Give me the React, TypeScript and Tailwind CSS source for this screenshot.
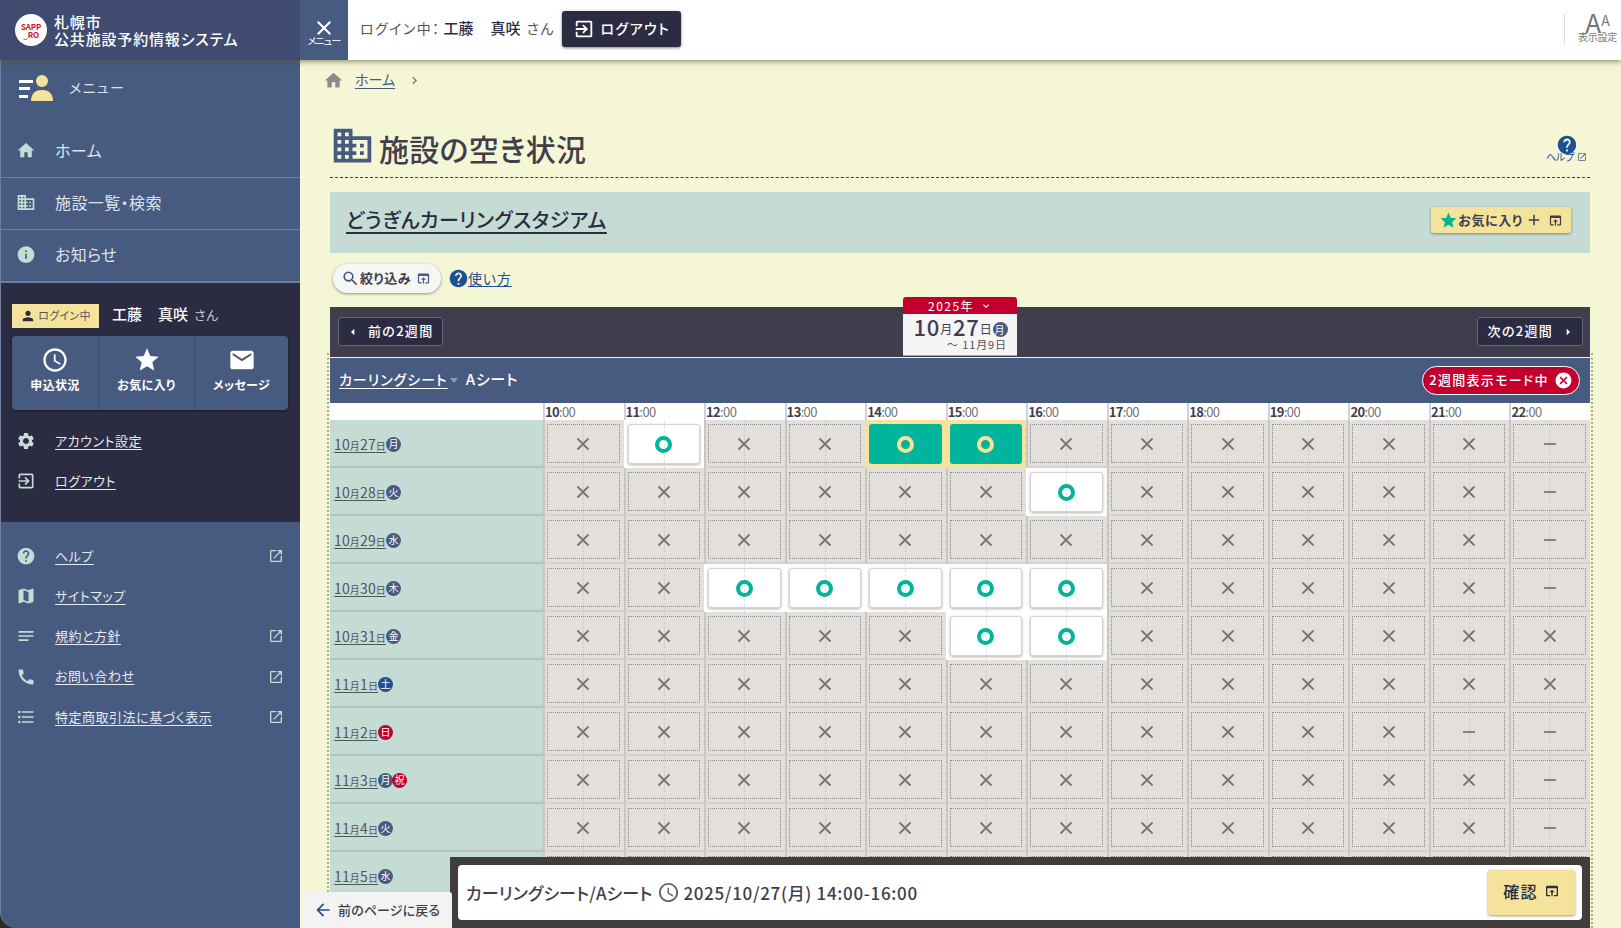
import React from "react";
import {
  MdHome, MdDomain, MdInfo, MdPerson, MdAccessTime, MdStar, MdEmail, MdSettings, MdExitToApp, MdHelp, MdMap,
  MdNotes, MdCall, MdFormatListBulleted, MdOpenInNew, MdOutlineOpenInBrowser, MdSearch, MdCancel, MdArrowBack,
  MdArrowLeft, MdArrowRight, MdExpandMore, MdChevronRight, MdAdd, MdClose,
} from "react-icons/md";

const times = ["10", "11", "12", "13", "14", "15", "16", "17", "18", "19", "20", "21", "22"];
type C = "x" | "o" | "s" | "d";

const mk = (over: Record<number, C>): C[] => times.map((_, i) => over[i] ?? "x");
const rows: { m: string; d: string; w: string; color: string; extra?: boolean; cells: C[] }[] = [
  { m: "10", d: "27", w: "月", color: "bg-[#475a80]", cells: mk({ 1: "o", 4: "s", 5: "s", 12: "d" }) },
  { m: "10", d: "28", w: "火", color: "bg-[#475a80]", cells: mk({ 6: "o", 12: "d" }) },
  { m: "10", d: "29", w: "水", color: "bg-[#475a80]", cells: mk({ 12: "d" }) },
  { m: "10", d: "30", w: "木", color: "bg-[#475a80]", cells: mk({ 2: "o", 3: "o", 4: "o", 5: "o", 6: "o", 12: "d" }) },
  { m: "10", d: "31", w: "金", color: "bg-[#475a80]", cells: mk({ 5: "o", 6: "o" }) },
  { m: "11", d: "1", w: "土", color: "bg-[#1f5096]", cells: mk({}) },
  { m: "11", d: "2", w: "日", color: "bg-[#c3002d]", cells: mk({ 11: "d", 12: "d" }) },
  { m: "11", d: "3", w: "月", color: "bg-[#475a80]", extra: true, cells: mk({ 12: "d" }) },
  { m: "11", d: "4", w: "火", color: "bg-[#475a80]", cells: mk({ 12: "d" }) },
  { m: "11", d: "5", w: "水", color: "bg-[#475a80]", cells: mk({ 12: "d" }) },
  { m: "11", d: "6", w: "木", color: "bg-[#475a80]", cells: mk({ 12: "d" }) },
];

function Ring({ yellow }: { yellow?: boolean }) {
  return <span className={`relative block w-[17px] h-[17px] rounded-full border-[4px] ${yellow ? "border-[#f5e39c]" : "border-[#00b59b]"}`} />;
}

function Cell({ c }: { c: C }) {
  if (c === "o" || c === "s") {
    const sel = c === "s";
    return (
      <div className={`relative h-[48px] pl-[2px] pr-[4px] py-[4px] ${sel ? "bg-[#f5e39c] border-l-2 border-[#f5e39c]" : "bg-white border-l-2 border-white"}`}>
        {!sel && <span className="absolute left-[38px] top-0 bottom-0 border-l border-dashed border-[#e6e3e6]" />}
        <div className={`h-full rounded-[3px] flex items-center justify-center ${sel ? "bg-[#00b59b]" : "bg-white border border-[#d5d2cd] shadow-[0_1px_3px_rgba(0,0,0,.3)]"}`}>
          <Ring yellow={sel} />
        </div>
      </div>
    );
  }
  return (
    <div className="relative h-[48px] bg-[#e3e0db] border-l-2 border-b-2 border-l-[#c9c6c0] border-b-[#d6d3cd] pl-[2px] pr-[4px] pt-[4px] pb-[3px]">
      <span className="absolute left-[38px] top-0 bottom-0 border-l border-dashed border-[#cfcbce]" />
      <div className="relative h-full border border-dotted border-[#8a888c] flex items-center justify-center">
        <svg width="14" height="14" viewBox="0 0 14 14" className="relative">
          {c === "x" ? (
            <path d="M1.5 1.5L12.5 12.5M12.5 1.5L1.5 12.5" stroke="#77757a" strokeWidth="1.8" fill="none" />
          ) : (
            <path d="M1 7H13" stroke="#85838a" strokeWidth="2" fill="none" />
          )}
        </svg>
      </div>
    </div>
  );
}

function WeekBadge({ t, color }: { t: string; color: string }) {
  return <span className={`shrink-0 inline-flex items-center justify-center w-[15px] h-[15px] rounded-full text-white text-[10px] leading-none ${color}`}>{t}</span>;
}

function SideLink({ icon, text, ext }: { icon: React.ReactNode; text: string; ext?: boolean }) {
  return (
    <div className="h-[40.2px] flex items-center pl-[15px] pr-[16px]">
      <span className="w-[20px] flex justify-center text-[#c4dcd4] text-[20px]">{icon}</span>
      <span className="ml-[19px] pb-[1px] text-[13px] tracking-[.04em] underline underline-offset-[3px] text-[#e6e9ee]">{text}</span>
      {ext && <MdOpenInNew className="ml-auto text-[#c4dcd4] text-[16px]" />}
    </div>
  );
}

function NavItem({ icon, text }: { icon: React.ReactNode; text: string }) {
  return (
    <div className="h-[52px] flex items-center pl-[15px] pb-[3px] border-b border-[#6f7e9f] text-[#dfe3ea]">
      <span className="w-[20px] flex justify-center text-[#c4dcd4] text-[21px]">{icon}</span>
      <span className="ml-[19px] text-[16px] tracking-[.025em]">{text}</span>
    </div>
  );
}

function Quick({ icon, text, w, border }: { icon: React.ReactNode; text: string; w: string; border?: boolean }) {
  return (
    <div className={`${w} pb-[6px] flex flex-col items-center justify-center ${border ? "border-l border-[#3d4b6d]" : ""}`}>
      <span className="text-white text-[28px] leading-none">{icon}</span>
      <span className="mt-[2px] text-white text-[12px] font-bold leading-[18px] tracking-[.03em]">{text}</span>
    </div>
  );
}

export default function App() {
  return (
    <div className="h-[928px] w-[1621px] overflow-hidden flex flex-col bg-[#2b2b22] font-['Noto_Sans_CJK_JP','Noto_Sans',sans-serif] [font-feature-settings:'palt'] text-[#403e4c]">
      {/* top bar */}
      <header className="relative z-20 h-[60px] shrink-0 flex bg-white shadow-[0_2px_5px_rgba(90,85,50,.6)]">
        <div className="w-[300px] bg-[#3f4c6f] flex items-center pl-[15px]">
          <div className="w-[32px] h-[32px] rounded-full bg-white flex flex-col items-center justify-center leading-none text-[#d0102f]">
            <span className="text-[8px] font-bold leading-[9px] tracking-[-.02em]">SAPP</span>
            <span className="text-[8px] font-bold leading-[8px] tracking-[-.02em]">‿RO</span>
          </div>
          <div className="ml-[7px] text-white text-[15px] leading-[17px] font-medium tracking-[.055em] pb-[1px]">
            <div>札幌市</div>
            <div>公共施設予約情報システム</div>
          </div>
        </div>
        <div className="w-[48px] bg-[#475a80] flex flex-col items-center justify-center text-white pt-[2px]">
          <MdClose className="text-[24px] -mb-[5px]" />
          <span className="text-[10px] leading-[12px] tracking-[-.08em]">メニュー</span>
        </div>
        <div className="flex-1 flex items-center pl-[12px] pb-[2px]">
          <span className="text-[14px] text-[#55535f] tracking-[.1em] pb-[2px]">ログイン中：</span>
          <span className="ml-[3px] text-[15px] font-medium text-[#2b2b42] pb-[2px]">工藤</span>
          <span className="ml-[17px] text-[15px] font-medium text-[#2b2b42] pb-[2px]">真咲</span>
          <span className="ml-[6px] text-[14px] text-[#55535f] tracking-[.1em] pb-[2px]">さん</span>
          <button className="ml-[7px] w-[119px] h-[36px] rounded-[3px] bg-[#2b2b42] text-white flex items-center justify-center gap-[6px] text-[14px] font-medium tracking-[.1em] shadow-[0_1px_3px_rgba(0,0,0,.5)]">
            <MdExitToApp className="text-[22px]" /><span className="pb-[2px]">ログアウト</span>
          </button>
          <div className="ml-auto mr-[9px] h-[30px] border-l border-[#dcdcd4]" />
          <div className="w-[47px] flex flex-col items-center text-[#777]">
            <div className="h-[24px] flex items-end leading-none -mt-[6px]">
              <span className="text-[26px] leading-[24px]">A</span>
              <span className="text-[14px] leading-[20px] self-start">A</span>
            </div>
            <span className="text-[10px] leading-[11px] -mt-[3px] tracking-[-.03em]">表示設定</span>
          </div>
        </div>
      </header>

      <div className="flex-1 flex min-h-0">
        {/* side */}
        <aside className="w-[300px] shrink-0 bg-[#475a80] rounded-bl-[16px] border-l border-[#6f7e9f] overflow-hidden">
          <div className="h-[66px] pb-[11px] flex items-center pl-[18px]">
            <svg width="36" height="26" viewBox="0 0 36 26">
              <rect x="0" y="5" width="14" height="3" fill="#fff" />
              <rect x="0" y="12" width="11" height="3" fill="#fff" />
              <rect x="0" y="20" width="9" height="3" fill="#fff" />
              <circle cx="23" cy="6" r="6" fill="#f5e39c" />
              <path d="M12 26c0-8 5-11 11-11s11 3 11 11z" fill="#f5e39c" />
            </svg>
            <span className="ml-[14px] text-[14px] text-[#dfe3ea] tracking-[.1em]">メニュー</span>
          </div>
          <NavItem icon={<MdHome />} text="ホーム" />
          <NavItem icon={<MdDomain />} text="施設一覧・検索" />
          <NavItem icon={<MdInfo />} text="お知らせ" />
          <div className="h-[240px] bg-[#2b2b42] pt-[21px] px-[11px] border-t border-[#6f7e9f]">
            <div className="flex items-center h-[24px]">
              <span className="w-[87px] h-[24px] bg-[#f5e39c] flex items-center justify-center text-[11px] text-[#55535f] tracking-[.03em] pb-[1px]">
                <MdPerson className="text-[16px] text-[#2b2b42] mr-[2px]" />ログイン中
              </span>
              <span className="ml-[13px] text-[15px] font-medium text-white pb-[3px]">工藤</span>
              <span className="ml-[16px] text-[15px] font-medium text-white pb-[3px]">真咲</span>
              <span className="ml-[6px] text-[13px] text-[#c9c9d2] tracking-[.04em] pb-[3px]">さん</span>
            </div>
            <div className="mt-[8px] h-[74px] w-[276px] bg-[#475a80] rounded-[4px] flex shadow-[0_1px_3px_rgba(0,0,0,.4)]">
              <Quick w="w-[86px]" icon={<MdAccessTime />} text="申込状況" />
              <Quick w="w-[96px]" icon={<MdStar />} text="お気に入り" border />
              <Quick w="w-[94px]" icon={<MdEmail />} text="メッセージ" border />
            </div>
            <div className="mt-[11px] -ml-[11px]">
              <SideLink icon={<MdSettings />} text="アカウント設定" />
              <SideLink icon={<MdExitToApp />} text="ログアウト" />
            </div>
          </div>
          <div className="pt-[14px]">
            <SideLink icon={<MdHelp />} text="ヘルプ" ext />
            <SideLink icon={<MdMap />} text="サイトマップ" />
            <SideLink icon={<MdNotes />} text="規約と方針" ext />
            <SideLink icon={<MdCall />} text="お問い合わせ" ext />
            <SideLink icon={<MdFormatListBulleted />} text="特定商取引法に基づく表示" ext />
          </div>
        </aside>

        {/* main */}
        <main className="relative flex-1 min-w-0 bg-[#f5f6d5] pl-[30px] pr-[31px] overflow-hidden">
          <div className="h-[40px] flex items-center text-[14px]">
            <MdHome className="text-[#8a8a90] text-[21px] -ml-[7px]" />
            <span className="ml-[11px] pb-[1px] underline underline-offset-[3px] text-[#475a80]">ホーム</span>
            <MdChevronRight className="ml-[12px] text-[#77757a] text-[15px]" />
          </div>
          <div className="h-[78px] pt-[19px] flex items-center border-b border-dashed border-[#403e4c] pl-[3px]">
            <MdDomain className="text-[#475a80] text-[45px] -ml-[3px] -mr-[1px] -mt-[6px]" />
            <h1 className="ml-[5px] text-[30px] font-medium text-[#403e4c] tracking-[.01em]">施設の空き状況</h1>
            <div className="ml-auto mr-[3px] flex flex-col items-center text-[#1f5096]">
              <MdHelp className="text-[22px] -mb-[5px] ml-[2px]" />
              <span className="flex items-center text-[10px] leading-[11px] tracking-[-.02em]">ヘルプ<MdOpenInNew className="ml-[3px] text-[10px] text-[#475a80]" /></span>
            </div>
          </div>
          <div className="mt-[14px] h-[61px] bg-[#c4dcd4] flex items-center pl-[16px] pr-[19px] pb-[5px]">
            <span className="text-[20px] font-medium text-[#2b2b42] tracking-[.027em] underline underline-offset-[4px] decoration-2">どうぎんカーリングスタジアム</span>
            <button className="ml-auto w-[140px] h-[26px] rounded-[3px] bg-[#f5e39c] flex items-center justify-center text-[13px] font-bold tracking-[.05em] text-[#403e4c] shadow-[0_1px_3px_rgba(0,0,0,.4)]">
              <MdStar className="text-[#00b59b] text-[19px]" /><span className="pb-[1px]">お気に入り</span><MdAdd className="text-[18px] ml-[2px]" /><MdOutlineOpenInBrowser className="text-[15px] ml-[5px]" />
            </button>
          </div>
          <div className="mt-[11px] h-[29px] flex items-center pl-[3px]">
            <button className="w-[108px] h-[29px] rounded-full bg-[#f6f6f4] flex items-center pl-[8px] text-[13px] font-bold tracking-[.04em] text-[#403e4c] shadow-[0_1px_3px_rgba(0,0,0,.4)]">
              <MdSearch className="text-[19px] text-[#475a80]" /><span className="pb-[1px]">絞り込み</span><MdOutlineOpenInBrowser className="text-[15px] ml-[5px] text-[#475a80]" />
            </button>
            <MdHelp className="ml-[7px] text-[#1f5096] text-[21px]" />
            <span className="-ml-[1px] text-[14px] text-[#1f5096] underline underline-offset-[2px] tracking-[.06em]">使い方</span>
          </div>

          <div className="mt-[14px] h-[50px] bg-[#403e4c] flex justify-between pl-[8px] pr-[7px] pt-[10px]">
            <button className="w-[105px] h-[29px] rounded-[3px] bg-[#2b2b42] border border-[#66657a] text-white text-[13px] font-medium flex items-center pl-[6px] tracking-[.1em]">
              <MdArrowLeft className="text-[16px] mr-[7px]" /><span className="pb-[1px]">前の2週間</span>
            </button>
            <div className="relative z-10 -mt-[20px] w-[114px] h-[59px] bg-[#f5f5f5] rounded-t-[3px] border-b border-[#a9a9a9]">
              <div className="h-[17px] bg-[#c3002d] rounded-t-[3px] flex items-center justify-center text-white text-[12px] tracking-[.12em]">2025年<MdExpandMore className="ml-[6px] text-[12px]" /></div>
              <div className="h-[24px] flex items-end justify-center pl-[1px] text-[#403e4c] leading-none tracking-[.05em]">
                <span className="text-[22px] font-medium leading-[24px]">10</span><span className="text-[12px] leading-[18px]">月</span>
                <span className="text-[22px] font-medium leading-[24px]">27</span><span className="text-[12px] leading-[18px]">日</span>
                <span className="mb-[1px] inline-flex"><WeekBadge t="月" color="bg-[#475a80]" /></span>
              </div>
              <div className="text-[11px] leading-[13px] text-right pr-[10px] tracking-[.08em] text-[#55535f]">〜 11月9日</div>
            </div>
            <button className="w-[106px] h-[29px] rounded-[3px] bg-[#2b2b42] border border-[#66657a] text-white text-[13px] font-medium flex items-center justify-end pr-[6px] tracking-[.1em]">
              <span className="pb-[1px]">次の2週間</span><MdArrowRight className="text-[16px] ml-[7px]" />
            </button>
          </div>

          <div className="-mx-[3px] px-[1px] mt-[-4px] pt-[5px] border-x-2 border-dotted border-[#b0b082]">
            <div className="h-[45px] bg-[#475a80] flex items-center pl-[9px] pr-[10px] text-white">
              <span className="text-[14px] font-medium underline underline-offset-[3px] tracking-[.07em] pb-[2px]">カーリングシート</span>
              <span className="ml-[2px] w-0 h-0 border-x-[4px] border-t-[5px] border-x-transparent border-t-[#8d97ae]" />
              <span className="ml-[8px] text-[15px] font-medium tracking-[.05em] pb-[2px]">Aシート</span>
              <div className="ml-auto w-[158px] h-[29px] rounded-full bg-[#c3002d] border border-white flex items-center justify-center text-[13px] font-medium tracking-[.1em]">
                <span className="pb-[2px]">2週間表示モード中</span><MdCancel className="ml-[5px] text-[19px]" />
              </div>
            </div>
            <div className="grid grid-cols-[213px_repeat(13,minmax(0,1fr))]">
              <div className="h-[17px] bg-white" />
              {times.map((t) => (
                <div key={t} className="h-[17px] bg-white border-l-2 border-[#c9d4e4] flex items-center text-[13px] tracking-[-.05em] leading-none">
                  <span className="font-bold text-[#403e4c]">{t}</span><span className="text-[#77757a]">:00</span>
                </div>
              ))}
              {rows.map((r, i) => (
                <React.Fragment key={i}>
                  <div className="h-[48px] bg-[#c4dcd4] border-b-2 border-[#b3c2b6] flex items-center pl-[4px] pt-[2px] text-[#55535f]">
                    <span className="underline underline-offset-[2px] text-[14px] leading-none tracking-[.01em]">
                      {r.m}<span className="text-[10px]">月</span>{r.d}<span className="text-[10px]">日</span>
                    </span>
                    <WeekBadge t={r.w} color={r.color} />
                    {r.extra && <span className="-ml-[1px] inline-flex"><WeekBadge t="祝" color="bg-[#c3002d]" /></span>}
                  </div>
                  {r.cells.map((c, j) => <Cell key={j} c={c} />)}
                </React.Fragment>
              ))}
            </div>
          </div>

          {/* fixed bottom */}
          <div className="absolute left-[3px] bottom-0 z-20 w-[149px] h-[36px] bg-[#f3f3f3] rounded-t-[3px] flex items-center pl-[10px] text-[13px] font-medium tracking-[.01em] text-[#403e4c]">
            <MdArrowBack className="text-[#1f5096] text-[20px] mr-[5px]" /><span className="pb-[1px]">前のページに戻る</span>
          </div>
          <div className="absolute left-[150px] right-[31px] bottom-0 z-10 h-[71px] bg-[#3f3e3b] pt-[8px] px-[8px]">
            <div className="h-[55px] bg-white rounded-[4px] flex items-center pl-[8px] pr-[7px] text-[17px] font-medium tracking-[.005em] text-[#403e4c]">
              カーリングシート/Aシート
              <MdAccessTime className="ml-[5px] text-[23px] text-[#66646e]" />
              <span className="ml-[3px] tracking-[.04em]">2025/10/27(月) 14:00-16:00</span>
              <button className="ml-auto w-[87px] h-[45px] rounded-[3px] bg-[#f5e39c] flex items-center justify-center pb-[3px] text-[16px] font-medium tracking-[.08em] text-[#2b2b42] shadow-[0_1px_3px_rgba(0,0,0,.4)]">
                確認<MdOutlineOpenInBrowser className="ml-[6px] text-[16px]" />
              </button>
            </div>
          </div>
        </main>
      </div>
    </div>
  );
}
